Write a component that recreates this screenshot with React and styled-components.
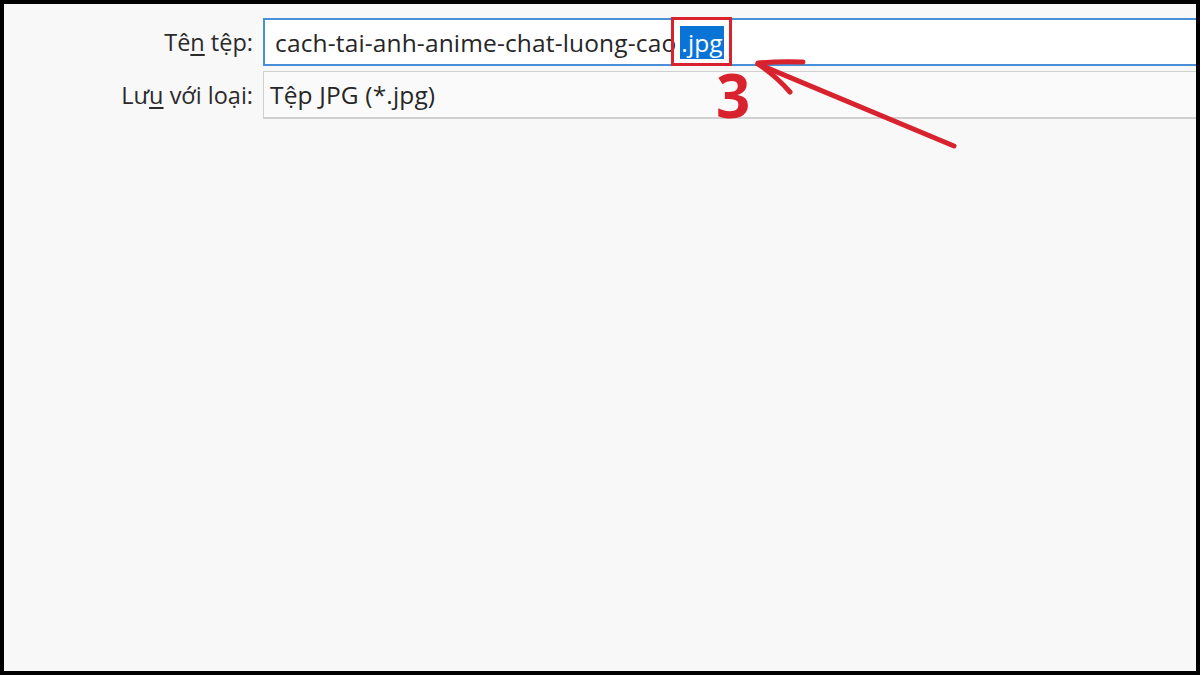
import styled, { createGlobalStyle } from "styled-components";

const Global = createGlobalStyle`
  html, body {
    margin: 0;
    padding: 0;
    background: #000;
  }
`;

const Screen = styled.div`
  width: 1200px;
  height: 675px;
  background: #000;
  padding: 4px;
  box-sizing: border-box;
  overflow: hidden;
`;

const Dialog = styled.div`
  position: relative;
  width: 1192px;
  height: 667px;
  background: #f8f8f8;
  overflow: hidden;
  font-family: "Open Sans", "Noto Sans", sans-serif;
`;

const Form = styled.div`
  display: grid;
  grid-template-columns: 249px 1fr;
  column-gap: 10px;
  row-gap: 5px;
  padding-top: 14px;
  margin-right: -20px;
`;

const Label = styled.label`
  justify-self: end;
  align-self: center;
  font-size: 23.5px;
  color: #2b2b2b;
  white-space: nowrap;

  u {
    text-decoration-thickness: 2px;
    text-underline-offset: 3px;
  }
`;

const Field = styled.div`
  height: 48px;
  box-sizing: border-box;
  display: flex;
  align-items: center;
  padding-left: ${(p) => p.$pad}px;
  font-size: 24.5px;
  letter-spacing: 0.15px;
  color: #262626;
  white-space: nowrap;
  background: ${(p) => (p.$focused ? "#ffffff" : "#fafafa")};
  border: ${(p) => (p.$focused ? "2px solid #4a90d9" : "1px solid #d0d0d0")};
  border-bottom-width: 2px;
`;

const Selected = styled.span`
  position: relative;
  margin-left: 4px;
  background: #0a74d6;
  color: #fff;
  padding: 0 1px;

  &::after {
    content: "";
    position: absolute;
    left: -9px;
    right: -8px;
    top: -9px;
    bottom: -7px;
    border: 3px solid #d8232f;
  }
`;

const StepNumber = styled.div`
  position: absolute;
  left: 712px;
  top: 61px;
  font-family: "Open Sans", "Noto Sans", sans-serif;
  font-weight: 700;
  font-size: 60px;
  line-height: 1;
  color: #d8232f;
`;

const Arrow = styled.svg`
  position: absolute;
  left: 0;
  top: 0;
  pointer-events: none;
`;

export default function App() {
  return (
    <>
      <Global />
      <Screen>
        <Dialog>
          <Form>
            <Label>
              Tê<u>n</u> tệp:
            </Label>
            <Field $focused $pad={10}>
              cach-tai-anh-anime-chat-luong-cao<Selected>.jpg</Selected>
            </Field>
            <Label>
              Lư<u>u</u> với loại:
            </Label>
            <Field $pad={6}>Tệp JPG (*.jpg)</Field>
          </Form>
          <StepNumber>3</StepNumber>
          <Arrow width="1192" height="667">
            <g
              stroke="#d8232f"
              strokeWidth="5"
              strokeLinecap="round"
              fill="none"
            >
              <path d="M950 142 L754 60" />
              <path d="M754 59 Q775 57 799 58" />
              <path d="M754 60 Q772 72 786 88" />
            </g>
          </Arrow>
        </Dialog>
      </Screen>
    </>
  );
}
